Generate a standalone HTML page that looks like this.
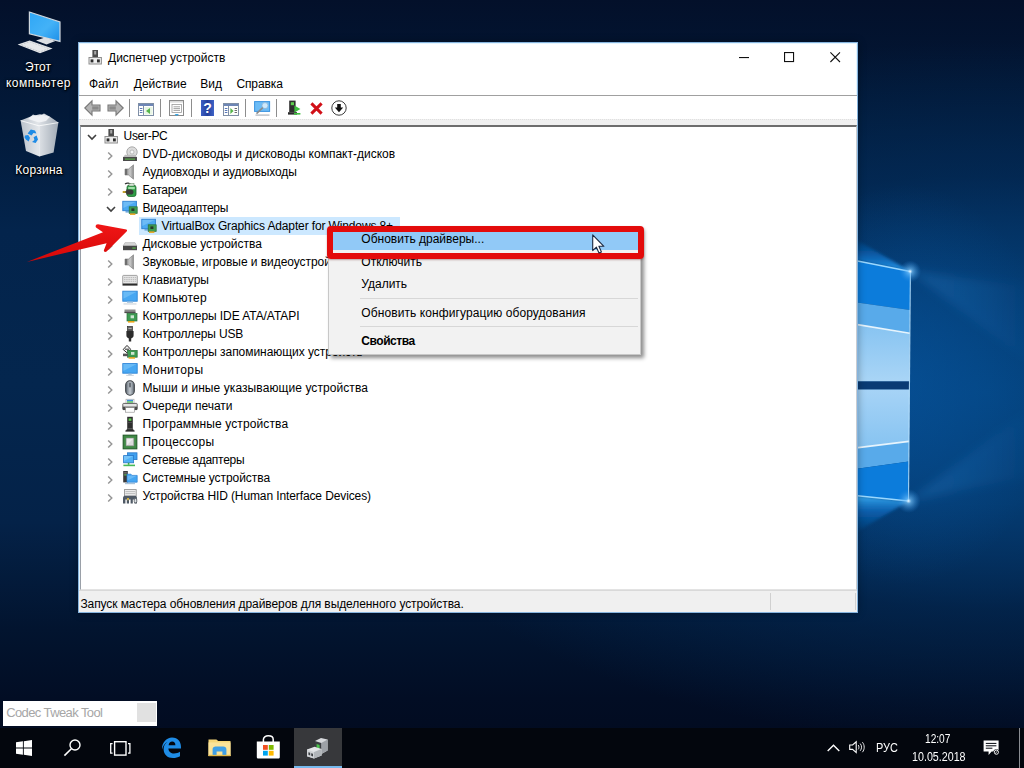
<!DOCTYPE html>
<html lang="ru">
<head>
<meta charset="utf-8">
<title>Диспетчер устройств</title>
<style>
*{box-sizing:border-box;margin:0;padding:0}
html,body{width:1024px;height:768px;overflow:hidden}
body{position:relative;font-family:"Liberation Sans","DejaVu Sans",sans-serif;font-size:12px;color:#000;background:#06183a}
.abs{position:absolute}
svg{display:block;overflow:visible}
/* wallpaper */
#wall{left:0;top:0;width:1024px;height:768px;
 background:
  radial-gradient(ellipse 150px 200px at 905px 385px, rgba(8,92,172,.45) 0%, rgba(8,92,172,0) 100%),
  radial-gradient(ellipse 660px 350px at 985px 392px, rgba(4,68,128,1) 0%, rgba(4,62,118,.9) 32%, rgba(3,48,96,.5) 62%, rgba(3,40,84,0) 100%),
  linear-gradient(180deg,#03102a 0%,#021a3a 16%,#03244c 30%,#04264e 50%,#042248 68%,#02142f 82%,#020d24 91%,#020a1e 100%);
}
/* desktop icons */
.dlabel{color:#fff;font-size:12px;line-height:15px;text-align:center;white-space:nowrap;text-shadow:0 1px 2px #000,0 0 3px rgba(0,0,0,.9),1px 1px 1px rgba(0,0,0,.8)}
/* window */
#win{left:78px;top:42px;width:780px;height:571px;background:#fff;border:1px solid #86b4de;box-shadow:0 0 8px rgba(0,0,0,.32), inset 0 0 0 1px #e4f5ff}
#title{left:29px;top:6px;height:18px;line-height:18px;font-size:12px;white-space:nowrap}
.mi{top:32px;height:18px;line-height:18px;white-space:nowrap}
#menuline{left:0;top:52px;width:778px;height:1px;background:#a0a0a0}
#toolbar{left:0;top:53px;width:778px;height:23px;background:#fff}
.tsep{top:4px;width:1px;height:18px;background:#8d8d8d}
#tbgap{left:0;top:76px;width:778px;height:7px;background:#f0f0f0;border-top:1px dotted #e0e0e0}
#tree{left:1px;top:82px;width:777px;height:465px;background:#fff;border:1px solid #9aa0a8;border-top:2px solid #6d6d6d;border-bottom-color:#e3e3e3;border-right-color:#c9ccd0}
.row{position:absolute;height:18px;line-height:18px;white-space:nowrap;font-size:12px}
.chev{position:absolute;width:10px;height:10px}
.ico{position:absolute;width:16px;height:16px}
#status{left:0;top:547px;width:778px;height:22px;background:#f0f0f0;border-top:1px solid #d9d9d9}
#status span{position:absolute;left:1.4px;top:4px;letter-spacing:-.08px;line-height:18px;white-space:nowrap}
/* context menu */
#menu{left:328px;top:227px;width:313px;height:128px;background:#f2f2f2;border:1px solid #c8c8c8;box-shadow:3px 3px 4px rgba(0,0,0,.45)}
.cmi{position:absolute;left:32.3px;height:22px;line-height:22px;white-space:nowrap;font-size:12px}
.csep{position:absolute;left:31px;width:278px;height:1px;background:#d7d7d7}
#hl{left:333px;top:232px;width:305px;height:18px;background:#91c9f7}
#redbox{left:327px;top:226px;width:317px;height:33px;border:6px solid #e30b0b;border-radius:4px;box-shadow:0 1px 2px rgba(80,0,0,.35)}
/* taskbar */
#taskbar{left:0;top:728px;width:1024px;height:40px;background:#03060d}
#tip{left:3px;top:701px;width:154px;height:25px;background:#fff;border:1px solid #fff}
#tip span{position:absolute;left:2.2px;top:2px;line-height:18px;font-size:13px;color:#a6a6a6;white-space:nowrap;letter-spacing:-.6px}
.tray{color:#fff;font-size:12px;white-space:nowrap;line-height:14px}
</style>
</head>
<body>
<div id="wall" class="abs"></div>

<span class="abs" style="left:0;top:0"><svg width="1024" height="768" viewBox="0 0 1024 768" style=""><defs><linearGradient id="p3" x1="0" y1="0" x2="0" y2="1"><stop offset="0" stop-color="#86c3f1"/><stop offset="1" stop-color="#a9d5f6"/></linearGradient><linearGradient id="p4" x1="0" y1="0" x2="0" y2="1"><stop offset="0" stop-color="#a6d3f6"/><stop offset="1" stop-color="#86c3f1"/></linearGradient><linearGradient id="gu" x1="0" y1="1" x2="0" y2="0"><stop offset="0" stop-color="#2aa2f6" stop-opacity=".95"/><stop offset=".45" stop-color="#0f74cf" stop-opacity=".6"/><stop offset="1" stop-color="#0a5cae" stop-opacity="0"/></linearGradient><linearGradient id="gd" x1="0" y1="0" x2="0" y2="1"><stop offset="0" stop-color="#3fb4fa" stop-opacity=".95"/><stop offset=".4" stop-color="#0f74cf" stop-opacity=".6"/><stop offset="1" stop-color="#0a5cae" stop-opacity="0"/></linearGradient><radialGradient id="fl"><stop offset="0" stop-color="#f0faff" stop-opacity="1"/><stop offset=".22" stop-color="#7cc8ff" stop-opacity=".65"/><stop offset="1" stop-color="#2a8ae0" stop-opacity="0"/></radialGradient><linearGradient id="bm" x1="0" y1="0" x2="1" y2="0"><stop offset="0" stop-color="#3a9cf0" stop-opacity=".22"/><stop offset="1" stop-color="#3a9cf0" stop-opacity="0"/></linearGradient><filter id="bl" x="-20%" y="-20%" width="140%" height="140%"><feGaussianBlur stdDeviation="5"/></filter><filter id="bl2" x="-20%" y="-20%" width="140%" height="140%"><feGaussianBlur stdDeviation="1.6"/></filter></defs><g filter="url(#bl)"><path d="M910 271 L1040 288 V372 Z" fill="url(#bm)"/><path d="M909 501 L1040 474 V400 Z" fill="url(#bm)"/></g><path d="M850 236 L850 259.4 L910.4 271.4 Z" fill="url(#gu)" filter="url(#bl2)"/><path d="M850 495 L908.5 501 L850 536 Z" fill="url(#gd)" filter="url(#bl2)"/><path d="M850 259.4 L910.4 271.4 L910 310 L850 301.6Z" fill="#0c7cdb"/><path d="M850 301.6 L910 310 L909.8 333 L850 323.2Z" fill="#58aaea"/><path d="M850 323.2 L909.8 333 L909.4 381.5 L850 381.5Z" fill="url(#p3)"/><path d="M850 323.4 L909.8 333.2" stroke="#e6f4fd" stroke-width="1.6"/><rect x="850" y="381.5" width="59.6" height="8" fill="#0a3b74"/><path d="M850 389.5 L909.4 389.5 L909 441.6 L850 448.8Z" fill="url(#p4)"/><path d="M850 448.8 L909 441.6 L908.8 461.4 L850 469.8Z" fill="#58aaea"/><path d="M850 469.8 L908.8 461.4 L908.5 501 L850 495Z" fill="#0c7cdb"/><path d="M850 448.6 L909 441.4" stroke="#e6f4fd" stroke-width="1.6"/><path d="M850 259.4 L910.4 271.4" stroke="#9ad8ff" stroke-width="1.5"/><path d="M850 495 L908.5 501" stroke="#9ad8ff" stroke-width="1.5"/><path d="M910.4 271.4 L908.5 501" stroke="#bfe6ff" stroke-width="1.1" opacity=".85"/><circle cx="910.2" cy="271.4" r="11" fill="url(#fl)"/><circle cx="908.6" cy="501" r="12" fill="url(#fl)"/></svg></span>

<span class="abs" style="left:17px;top:11px"><svg width="44" height="43" viewBox="0 0 44 43" style=""><defs><linearGradient id="pcg" x1="0" y1="0" x2="1" y2="1"><stop offset="0" stop-color="#2fa6f5"/><stop offset=".55" stop-color="#43b2f7"/><stop offset="1" stop-color="#1d8fe8"/></linearGradient></defs><path d="M12.4 1 L43 11 V30.4 L12.4 22.8Z" fill="url(#pcg)" stroke="#cfd6dd" stroke-width="1.2"/><path d="M19 29.4 L28 26.4 L38.4 30 L29.5 33.6Z" fill="#dcdfe3"/><path d="M0.6 33.6 L12.6 29.4 L35.6 37.6 L23 42.2Z" fill="#e6e8ea"/><path d="M4 33.8 L12.6 30.8 L32 37.6 L23 40.8Z" fill="none" stroke="#c3c7cc" stroke-width=".8" stroke-dasharray="2 1"/></svg></span>
<div class="dlabel abs" style="left:0;top:59px;width:76px;line-height:16px">Этот<br><span style="letter-spacing:.5px;margin-left:1px">компьютер</span></div>
<span class="abs" style="left:20px;top:113px"><svg width="39" height="44" viewBox="0 0 39 44" style=""><defs><linearGradient id="bg1" x1="0" x2="1"><stop offset="0" stop-color="#c9cfd6"/><stop offset=".45" stop-color="#f2f4f6"/><stop offset="1" stop-color="#aeb6bf"/></linearGradient></defs><path d="M0.6 7.6 L12 3 L20 1.2 L30 3.8 L38.4 9.6 L33.6 39.4 L19.4 43.4 L6 38Z" fill="url(#bg1)" opacity=".93"/><path d="M0.6 7.6 L19 12.8 L38.4 9.6" fill="none" stroke="#fff" stroke-width="1" opacity=".8"/><path d="M19 12.8 L19.4 43.4" stroke="#fff" stroke-width=".8" opacity=".5"/><path d="M8 6 L13 1.4 L18 3.4 L24 0.6 L30 3.8 L26 8 L19 9.6Z" fill="#f4f6f8" opacity=".85"/><g fill="#1e8be6"><path d="M7.6 20.6 L10.8 16.4 L15 17.6 L16.4 20.6 L13.4 20 L11.6 22.6Z"/><path d="M16.6 22.4 L18 26.4 L15.6 30 L12 29 L14.4 27 L13.6 24.2Z"/><path d="M5 22.6 L8.2 22 L10 24.8 L8.6 28.4 L6 26.6 L4.6 24.4Z"/></g></svg></span>
<div class="dlabel abs" style="left:1px;top:163px;width:76px;letter-spacing:.25px">Корзина</div>

<div id="win" class="abs">
  <span class="ico" style="left:8px;top:6px"><svg width="16" height="16" viewBox="0 0 16 16" style=""><rect x="5.4" y="1" width="5.6" height="8" fill="#4d4d4d"/><rect x="7.2" y="2" width="2" height="3.5" fill="#a8a8a8"/><rect x="2" y="8.5" width="12.4" height="6.5" fill="#ececec" stroke="#8e8e8e"/><rect x="3.6" y="10.4" width="2.8" height="3" fill="#2e2e2e"/><rect x="10" y="10.4" width="2.8" height="3" fill="#2e2e2e"/></svg></span>
  <span class="abs" style="left:660px;top:14px"><svg width="11" height="2" viewBox="0 0 11 2" style=""><rect x="0" y="0" width="10" height="1.1" fill="#111"/></svg></span>
  <span class="abs" style="left:705px;top:9px"><svg width="11" height="11" viewBox="0 0 11 11" style=""><rect x="0.55" y="0.55" width="9" height="9" fill="none" stroke="#111" stroke-width="1.1"/></svg></span>
  <span class="abs" style="left:751px;top:9px"><svg width="11" height="11" viewBox="0 0 11 11" style=""><path d="M0.4 0.4 L10 10 M10 0.4 L0.4 10" stroke="#111" stroke-width="1.1"/></svg></span>
  <div id="title" class="abs">Диспетчер устройств</div>
  <div class="mi abs" style="left:10px">Файл</div>
  <div class="mi abs" style="left:54.8px">Действие</div>
  <div class="mi abs" style="left:121.3px">Вид</div>
  <div class="mi abs" style="left:157.4px;letter-spacing:-.1px">Справка</div>
  <div id="menuline" class="abs"></div>
  <div id="toolbar" class="abs">
    <span class="abs" style="left:5px;top:4px"><svg width="17" height="16" viewBox="0 0 17 16" style=""><path d="M0.8 8 L8 0.8 V5 H16 V11 H8 V15.2Z" fill="#b4b4b4" stroke="#787878" stroke-width="1.1"/><rect x="8.2" y="6.4" width="6.4" height="3.2" fill="#8a8a8a"/></svg></span>
    <span class="abs" style="left:28px;top:4px"><svg width="17" height="16" viewBox="0 0 17 16" style=""><path d="M16.2 8 L9 0.8 V5 H1 V11 H9 V15.2Z" fill="#b4b4b4" stroke="#787878" stroke-width="1.1"/><rect x="2.4" y="6.4" width="6.4" height="3.2" fill="#8a8a8a"/></svg></span>
    <i class="tsep abs" style="left:50px;top:3px"></i>
    <i class="tsep abs" style="left:81px;top:3px"></i>
    <i class="tsep abs" style="left:112px;top:3px"></i>
    <i class="tsep abs" style="left:166px;top:3px"></i>
    <i class="tsep abs" style="left:197px;top:3px"></i>
    <span class="abs" style="left:59px;top:7px"><svg width="16" height="13" viewBox="0 0 16 13" style=""><rect x="0.5" y="0.5" width="15" height="12" fill="#fff" stroke="#7f8fa6"/><rect x="1" y="1" width="14" height="2" fill="#6d86b6"/><path d="M5.5 3 V12.5" stroke="#7f8fa6"/><path d="M1.8 5.5 H4.4 M1.8 7.5 H4.4 M1.8 9.5 H4.4" stroke="#5a78b8" stroke-width="1"/><rect x="6.5" y="4" width="8" height="7.6" fill="#e8f5e4"/><path d="M12 5 V11 L8 8Z" fill="#55b54a"/></svg></span>
    <span class="abs" style="left:90px;top:4px"><svg width="15" height="16" viewBox="0 0 15 16" style=""><rect x="0.5" y="0.5" width="14" height="15" fill="#fff" stroke="#8a8a8a"/><rect x="1" y="1" width="13" height="1.6" fill="#d9d9d9"/><rect x="3" y="4.4" width="9.5" height="8" fill="#fff" stroke="#9a9a9a" stroke-width=".8"/><path d="M4.5 6.8 H11 M4.5 8.6 H11 M4.5 10.4 H11" stroke="#8a8a8a" stroke-width=".8"/><path d="M5.5 14 H10 L7.8 16Z" fill="#36a3e0"/></svg></span>
    <span class="abs" style="left:122px;top:4px"><svg width="13" height="16" viewBox="0 0 13 16" style=""><defs><linearGradient id="hg" x1="0" x2="1"><stop offset="0" stop-color="#3d5fc4"/><stop offset=".5" stop-color="#24409c"/><stop offset="1" stop-color="#3f63c8"/></linearGradient></defs><rect x="0" y="0" width="13" height="16" fill="url(#hg)"/><text x="6.5" y="13" font-family="Liberation Sans,sans-serif" font-weight="bold" font-size="14" fill="#fff" text-anchor="middle">?</text></svg></span>
    <span class="abs" style="left:144px;top:7px"><svg width="16" height="13" viewBox="0 0 16 13" style=""><rect x="0.5" y="0.5" width="15" height="12" fill="#fff" stroke="#7f8fa6"/><rect x="1" y="1" width="14" height="2" fill="#6d86b6"/><path d="M5.5 3 V12.5" stroke="#7f8fa6"/><path d="M1.8 5.5 H4.4 M1.8 7.5 H4.4 M1.8 9.5 H4.4" stroke="#5a78b8" stroke-width="1"/><rect x="6.5" y="4" width="8" height="7.6" fill="#e8f5e4"/><rect x="6.5" y="4" width="8" height="7.6" fill="#fff"/><path d="M7.4 5 V11 L10.6 8Z" fill="#55b54a"/><path d="M11.6 5.5 H14 M11.6 7.5 H14 M11.6 9.5 H14" stroke="#6d6d6d"/></svg></span>
    <span class="abs" style="left:175px;top:5px"><svg width="17" height="15" viewBox="0 0 17 15" style=""><rect x="0.6" y="0.6" width="15" height="9.8" fill="#6cbcf6" stroke="#3a93e0" stroke-width="1"/><circle cx="11" cy="4.6" r="3" fill="#cfe9fb" stroke="#8fb6d8" stroke-width=".8"/><path d="M8.8 6.6 L2.5 12.6" stroke="#8c8c8c" stroke-width="1.6"/><rect x="1.5" y="13.4" width="14" height="1.4" fill="#b9bfc6"/></svg></span>
    <span class="abs" style="left:208px;top:4px"><svg width="14" height="16" viewBox="0 0 14 16" style=""><rect x="2.2" y="0.6" width="6.4" height="11.6" fill="#2f2f2f"/><rect x="3.8" y="2.2" width="3.2" height="3" fill="#5fcf4f"/><rect x="1" y="12.2" width="9" height="2.4" fill="#2a2a2a"/><path d="M7.4 5.6 L13.4 9 L7.4 12.4Z" fill="#3fbf3f"/><rect x="7" y="13" width="6.4" height="1.6" fill="#3fbf3f"/></svg></span>
    <span class="abs" style="left:231px;top:6px"><svg width="13" height="13" viewBox="0 0 13 13" style=""><path d="M1.4 1.4 L11.6 11.6 M11.6 1.4 L1.4 11.6" stroke="#d10f17" stroke-width="3"/></svg></span>
    <span class="abs" style="left:252px;top:4px"><svg width="16" height="16" viewBox="0 0 16 16" style=""><circle cx="8" cy="8" r="7.2" fill="#fff" stroke="#3c3c3c" stroke-width="1"/><path d="M6.2 4 H9.8 V7.6 H12.2 L8 12.2 L3.8 7.6 H6.2Z" fill="#111"/></svg></span>
  </div>
  <div id="tbgap" class="abs"></div>
  <div id="tree" class="abs">
    <span class="chev" style="left:6.0px;top:5px"><svg width="10" height="10" viewBox="0 0 10 10" style=""><path d="M1 3 L5 7 L9 3" fill="none" stroke="#404040" stroke-width="1.6"/></svg></span>
    <span class="ico" style="left:22px;top:1px"><svg width="16" height="16" viewBox="0 0 16 16" style=""><rect x="5.4" y="1" width="5.6" height="8" fill="#4d4d4d"/><rect x="7.2" y="2" width="2" height="3.5" fill="#a8a8a8"/><rect x="2" y="8.5" width="12.4" height="6.5" fill="#ececec" stroke="#8e8e8e"/><rect x="3.6" y="10.4" width="2.8" height="3" fill="#2e2e2e"/><rect x="10" y="10.4" width="2.8" height="3" fill="#2e2e2e"/></svg></span>
    <div class="row" id="r0" style="left:42.5px;top:0px;letter-spacing:-0.29px">User-PC</div>
    <span class="chev" style="left:24.0px;top:23.5px"><svg width="10" height="10" viewBox="0 0 10 10" style=""><path d="M3.2 1.4 L6.8 5 L3.2 8.6" fill="none" stroke="#969696" stroke-width="1.45"/></svg></span>
    <span class="ico" style="left:41px;top:19px"><svg width="16" height="16" viewBox="0 0 16 16" style=""><circle cx="10" cy="6" r="5.2" fill="#dcdcdc" stroke="#9b9b9b" stroke-width=".8"/><circle cx="10" cy="6" r="2" fill="#f6f6f6" stroke="#a9a9a9" stroke-width=".7"/><path d="M1 11.2 L3 8.8 H13 L15 11.2Z" fill="#bdbdbd"/><rect x="1" y="11" width="14" height="4" fill="#4a4a4a"/><rect x="3" y="12.6" width="10" height="1" fill="#5bbf4a"/></svg></span>
    <div class="row" id="r1" style="left:61.5px;top:18px">DVD-дисководы и дисководы компакт-дисков</div>
    <span class="chev" style="left:24.0px;top:41.5px"><svg width="10" height="10" viewBox="0 0 10 10" style=""><path d="M3.2 1.4 L6.8 5 L3.2 8.6" fill="none" stroke="#969696" stroke-width="1.45"/></svg></span>
    <span class="ico" style="left:41px;top:37px"><svg width="16" height="16" viewBox="0 0 16 16" style=""><defs><linearGradient id="spk" x1="0" x2="1"><stop offset="0" stop-color="#8a8a8a"/><stop offset=".6" stop-color="#c9c9c9"/><stop offset="1" stop-color="#8d8d8d"/></linearGradient></defs><path d="M3 5 H6.5 L11.5 0.8 V15.2 L6.5 11 H3Z" fill="url(#spk)" stroke="#7a7a7a" stroke-width=".6"/><rect x="3" y="5" width="2.2" height="6" fill="#6f6f6f"/></svg></span>
    <div class="row" id="r2" style="left:61.5px;top:36px;letter-spacing:-0.11px">Аудиовходы и аудиовыходы</div>
    <span class="chev" style="left:24.0px;top:59.5px"><svg width="10" height="10" viewBox="0 0 10 10" style=""><path d="M3.2 1.4 L6.8 5 L3.2 8.6" fill="none" stroke="#969696" stroke-width="1.45"/></svg></span>
    <span class="ico" style="left:41px;top:55px"><svg width="16" height="16" viewBox="0 0 16 16" style=""><path d="M3 2 C5 0.5 8 1 9 3" fill="none" stroke="#333" stroke-width="1.2"/><rect x="5" y="3.2" width="9" height="11.3" rx="2.2" fill="#2f9e46" stroke="#1d6a2d" stroke-width=".8"/><rect x="7" y="1.6" width="5" height="2.4" fill="#d8e8d8" stroke="#5a7a5a" stroke-width=".5"/><rect x="6.2" y="5" width="6.6" height="2.2" fill="#9fe0a8"/><path d="M1 9 h3.2 v-1.6 h4.3 c2 0 3 1 3 2.6 s-1 2.6 -3 2.6 h-4.3 v-1.6 h-3.2z" fill="#3a3a3a"/><rect x="0.6" y="9.2" width="3" height="1.6" fill="#e0b82e"/></svg></span>
    <div class="row" id="r3" style="left:61.5px;top:54px;letter-spacing:-0.29px">Батареи</div>
    <span class="chev" style="left:25.0px;top:77px"><svg width="10" height="10" viewBox="0 0 10 10" style=""><path d="M1 3 L5 7 L9 3" fill="none" stroke="#404040" stroke-width="1.6"/></svg></span>
    <span class="ico" style="left:41px;top:73px"><svg width="16" height="16" viewBox="0 0 16 16" style=""><rect x="0.8" y="1.3" width="13.6" height="9.4" fill="#4aa9f2" stroke="#2c7ed0" stroke-width=".9"/><path d="M1.3 1.8 H14 L1.3 8Z" fill="#7cc3f7" opacity=".7"/><rect x="3.5" y="11" width="4.5" height="1.6" fill="#6aa6dc"/><rect x="7.2" y="6.8" width="8" height="6.6" fill="#3d9b52" stroke="#2a7039" stroke-width=".7"/><rect x="9.4" y="8.4" width="3" height="2.6" fill="#26382a"/><rect x="8" y="13.4" width="5.4" height="1.5" fill="#e9a61a"/></svg></span>
    <div class="row" id="r4" style="left:61.5px;top:72px;letter-spacing:-0.28px">Видеоадаптеры</div>
    <div class="abs" style="left:57.5px;top:90px;width:261px;height:18px;background:#cce8ff"></div>
    <span class="ico" style="left:60px;top:91px"><svg width="16" height="16" viewBox="0 0 16 16" style=""><rect x="0.8" y="1.3" width="13.6" height="9.4" fill="#4aa9f2" stroke="#2c7ed0" stroke-width=".9"/><path d="M1.3 1.8 H14 L1.3 8Z" fill="#7cc3f7" opacity=".7"/><rect x="3.5" y="11" width="4.5" height="1.6" fill="#6aa6dc"/><rect x="7.2" y="6.8" width="8" height="6.6" fill="#3d9b52" stroke="#2a7039" stroke-width=".7"/><rect x="9.4" y="8.4" width="3" height="2.6" fill="#26382a"/><rect x="8" y="13.4" width="5.4" height="1.5" fill="#e9a61a"/></svg></span>
    <div class="row" id="r5" style="left:80.5px;top:90px;letter-spacing:-0.13px">VirtualBox Graphics Adapter for Windows 8+</div>
    <span class="chev" style="left:24.0px;top:113.5px"><svg width="10" height="10" viewBox="0 0 10 10" style=""><path d="M3.2 1.4 L6.8 5 L3.2 8.6" fill="none" stroke="#969696" stroke-width="1.45"/></svg></span>
    <span class="ico" style="left:41px;top:109px"><svg width="16" height="16" viewBox="0 0 16 16" style=""><path d="M1 10 L3 6.6 H13 L15 10Z" fill="#d6d6d6" stroke="#a6a6a6" stroke-width=".5"/><rect x="1" y="9.8" width="14" height="4.4" fill="#474747"/><rect x="10.3" y="11.5" width="3.4" height="1.1" fill="#5bbf4a"/></svg></span>
    <div class="row" id="r6" style="left:61.5px;top:108px;letter-spacing:-0.02px">Дисковые устройства</div>
    <span class="chev" style="left:24.0px;top:131.5px"><svg width="10" height="10" viewBox="0 0 10 10" style=""><path d="M3.2 1.4 L6.8 5 L3.2 8.6" fill="none" stroke="#969696" stroke-width="1.45"/></svg></span>
    <span class="ico" style="left:41px;top:127px"><svg width="16" height="16" viewBox="0 0 16 16" style=""><defs><linearGradient id="spk" x1="0" x2="1"><stop offset="0" stop-color="#8a8a8a"/><stop offset=".6" stop-color="#c9c9c9"/><stop offset="1" stop-color="#8d8d8d"/></linearGradient></defs><path d="M3 5 H6.5 L11.5 0.8 V15.2 L6.5 11 H3Z" fill="url(#spk)" stroke="#7a7a7a" stroke-width=".6"/><rect x="3" y="5" width="2.2" height="6" fill="#6f6f6f"/></svg></span>
    <div class="row" id="r7" style="left:61.5px;top:126px;letter-spacing:-0.05px">Звуковые, игровые и видеоустройства</div>
    <span class="chev" style="left:24.0px;top:149.5px"><svg width="10" height="10" viewBox="0 0 10 10" style=""><path d="M3.2 1.4 L6.8 5 L3.2 8.6" fill="none" stroke="#969696" stroke-width="1.45"/></svg></span>
    <span class="ico" style="left:41px;top:145px"><svg width="16" height="16" viewBox="0 0 16 16" style=""><rect x="0.7" y="3.4" width="14.6" height="8.6" rx=".8" fill="#e6e6e6" stroke="#8d8d8d" stroke-width=".8"/><path d="M2 5.5 H14 M2 7.4 H14 M2 9.3 H14" stroke="#b5b5b5" stroke-width=".9" stroke-dasharray="1.5 .7"/><rect x="0.5" y="11.6" width="15" height="2" fill="#2b2b2b"/></svg></span>
    <div class="row" id="r8" style="left:61.5px;top:144px;letter-spacing:-0.06px">Клавиатуры</div>
    <span class="chev" style="left:24.0px;top:167.5px"><svg width="10" height="10" viewBox="0 0 10 10" style=""><path d="M3.2 1.4 L6.8 5 L3.2 8.6" fill="none" stroke="#969696" stroke-width="1.45"/></svg></span>
    <span class="ico" style="left:41px;top:163px"><svg width="16" height="16" viewBox="0 0 16 16" style=""><rect x="0.8" y="1.2" width="14.4" height="10" fill="#47a7f2" stroke="#2d84d6" stroke-width=".9"/><path d="M1.3 1.7 H14.8 L1.3 8.8Z" fill="#7fc6f8" opacity=".6"/><rect x="5" y="11.6" width="6" height="1.3" fill="#a9c7e2"/><rect x="1.5" y="13.3" width="13" height="1.3" fill="#d3d9df"/></svg></span>
    <div class="row" id="r9" style="left:61.5px;top:162px;letter-spacing:0.25px">Компьютер</div>
    <span class="chev" style="left:24.0px;top:185.5px"><svg width="10" height="10" viewBox="0 0 10 10" style=""><path d="M3.2 1.4 L6.8 5 L3.2 8.6" fill="none" stroke="#969696" stroke-width="1.45"/></svg></span>
    <span class="ico" style="left:41px;top:181px"><svg width="16" height="16" viewBox="0 0 16 16" style=""><rect x="2.5" y="1.5" width="11" height="3.2" fill="#8c8c8c"/><rect x="2.5" y="3.8" width="11" height="1.3" fill="#4d4d4d"/><rect x="5" y="5.4" width="10" height="7.6" fill="#3d9b52" stroke="#2a7039" stroke-width=".7"/><rect x="8.6" y="7.3" width="3.4" height="3" fill="#cfe6d2"/><rect x="6" y="13" width="6.4" height="1.6" fill="#e9a61a"/></svg></span>
    <div class="row" id="r10" style="left:61.5px;top:180px;letter-spacing:-0.07px">Контроллеры IDE ATA/ATAPI</div>
    <span class="chev" style="left:24.0px;top:203.5px"><svg width="10" height="10" viewBox="0 0 10 10" style=""><path d="M3.2 1.4 L6.8 5 L3.2 8.6" fill="none" stroke="#969696" stroke-width="1.45"/></svg></span>
    <span class="ico" style="left:41px;top:199px"><svg width="16" height="16" viewBox="0 0 16 16" style=""><rect x="5.6" y="0.6" width="4.8" height="4.6" fill="#5a5a5a" stroke="#2c2c2c" stroke-width=".7"/><rect x="6.6" y="1.8" width="1" height="1.2" fill="#ddd"/><rect x="8.4" y="1.8" width="1" height="1.2" fill="#ddd"/><path d="M4.4 5 H11.6 V9.6 C11.6 11.4 10 12 9.2 12.4 V15.4 H6.8 V12.4 C6 12 4.4 11.4 4.4 9.6Z" fill="#2c2c2c"/></svg></span>
    <div class="row" id="r11" style="left:61.5px;top:198px;letter-spacing:-0.15px">Контроллеры USB</div>
    <span class="chev" style="left:24.0px;top:221.5px"><svg width="10" height="10" viewBox="0 0 10 10" style=""><path d="M3.2 1.4 L6.8 5 L3.2 8.6" fill="none" stroke="#969696" stroke-width="1.45"/></svg></span>
    <span class="ico" style="left:41px;top:217px"><svg width="16" height="16" viewBox="0 0 16 16" style=""><path d="M1.2 5.5 L5 1.4 L8.6 5.2 L5 8.8Z" fill="#f4f4f4" stroke="#2f2f2f" stroke-width="1"/><path d="M3 5.2 H7" stroke="#2f2f2f" stroke-width="1"/><rect x="5.6" y="6.4" width="9.6" height="6.8" fill="#3d9b52" stroke="#2a7039" stroke-width=".7"/><rect x="9" y="8" width="3.4" height="2.8" fill="#cfe6d2"/><rect x="1" y="9.6" width="5" height="2.6" fill="#555"/><rect x="6.6" y="13.2" width="6.4" height="1.5" fill="#e9a61a"/></svg></span>
    <div class="row" id="r12" style="left:61.5px;top:216px;letter-spacing:-0.05px">Контроллеры запоминающих устройств</div>
    <span class="chev" style="left:24.0px;top:239.5px"><svg width="10" height="10" viewBox="0 0 10 10" style=""><path d="M3.2 1.4 L6.8 5 L3.2 8.6" fill="none" stroke="#969696" stroke-width="1.45"/></svg></span>
    <span class="ico" style="left:41px;top:235px"><svg width="16" height="16" viewBox="0 0 16 16" style=""><rect x="0.8" y="1.6" width="14.4" height="9.6" fill="#47a7f2" stroke="#2d84d6" stroke-width=".9"/><path d="M1.3 2.1 H14.8 L1.3 9Z" fill="#7fc6f8" opacity=".6"/><rect x="6.3" y="11.6" width="3.4" height="1.2" fill="#9bbad6"/><rect x="4.2" y="12.8" width="7.6" height="1.1" fill="#c9d3dc"/></svg></span>
    <div class="row" id="r13" style="left:61.5px;top:234px;letter-spacing:0.45px">Мониторы</div>
    <span class="chev" style="left:24.0px;top:257.5px"><svg width="10" height="10" viewBox="0 0 10 10" style=""><path d="M3.2 1.4 L6.8 5 L3.2 8.6" fill="none" stroke="#969696" stroke-width="1.45"/></svg></span>
    <span class="ico" style="left:41px;top:253px"><svg width="16" height="16" viewBox="0 0 16 16" style=""><defs><linearGradient id="mou" x1="0" x2="1"><stop offset="0" stop-color="#5f6871"/><stop offset=".5" stop-color="#c3cad1"/><stop offset="1" stop-color="#636c75"/></linearGradient></defs><rect x="3.7" y="0.8" width="8.6" height="14.4" rx="4.3" fill="url(#mou)" stroke="#3b3f44" stroke-width="1.1"/><rect x="7.3" y="2.4" width="1.4" height="5" rx=".7" fill="#4a5058"/></svg></span>
    <div class="row" id="r14" style="left:61.5px;top:252px;letter-spacing:0.08px">Мыши и иные указывающие устройства</div>
    <span class="chev" style="left:24.0px;top:275.5px"><svg width="10" height="10" viewBox="0 0 10 10" style=""><path d="M3.2 1.4 L6.8 5 L3.2 8.6" fill="none" stroke="#969696" stroke-width="1.45"/></svg></span>
    <span class="ico" style="left:41px;top:271px"><svg width="16" height="16" viewBox="0 0 16 16" style=""><rect x="4" y="1.2" width="8" height="4.4" fill="#fff" stroke="#9b9b9b" stroke-width=".6"/><rect x="5" y="1.8" width="6" height="1.5" fill="#3b8de0"/><rect x="5" y="3.3" width="6" height="1.4" fill="#4fbf5a"/><rect x="0.8" y="5.4" width="14.4" height="6.2" rx=".8" fill="#e3e3e3" stroke="#555" stroke-width=".9"/><rect x="0.8" y="8.6" width="14.4" height="3.4" fill="#4b4b4b"/><rect x="3.6" y="9.6" width="8.8" height="4.6" fill="#fdfdfd" stroke="#8a8a8a" stroke-width=".6"/></svg></span>
    <div class="row" id="r15" style="left:61.5px;top:270px">Очереди печати</div>
    <span class="chev" style="left:24.0px;top:293.5px"><svg width="10" height="10" viewBox="0 0 10 10" style=""><path d="M3.2 1.4 L6.8 5 L3.2 8.6" fill="none" stroke="#969696" stroke-width="1.45"/></svg></span>
    <span class="ico" style="left:41px;top:289px"><svg width="16" height="16" viewBox="0 0 16 16" style=""><rect x="5.2" y="0.8" width="5.6" height="11.6" fill="#2e2e2e"/><rect x="6.6" y="2.4" width="2.8" height="2.4" fill="#5fcf4f"/><rect x="6" y="6" width="4" height=".8" fill="#555"/><path d="M4 15 L5.2 12.2 H10.8 L12 15Z" fill="#3a3a3a"/><rect x="3.4" y="14.4" width="9.2" height="1.2" fill="#222"/></svg></span>
    <div class="row" id="r16" style="left:61.5px;top:288px;letter-spacing:0.11px">Программные устройства</div>
    <span class="chev" style="left:24.0px;top:311.5px"><svg width="10" height="10" viewBox="0 0 10 10" style=""><path d="M3.2 1.4 L6.8 5 L3.2 8.6" fill="none" stroke="#969696" stroke-width="1.45"/></svg></span>
    <span class="ico" style="left:41px;top:307px"><svg width="16" height="16" viewBox="0 0 16 16" style=""><rect x="1.2" y="1.2" width="13.6" height="13.6" fill="#3f8a45" stroke="#235c2a" stroke-width="1.1"/><rect x="4.2" y="4.2" width="7.6" height="7.6" fill="#dcdcdc" stroke="#9a9a9a" stroke-width=".7"/><path d="M4.6 4.6 H11.4 L4.6 11.4Z" fill="#f2f2f2" opacity=".8"/></svg></span>
    <div class="row" id="r17" style="left:61.5px;top:306px;letter-spacing:0.23px">Процессоры</div>
    <span class="chev" style="left:24.0px;top:329.5px"><svg width="10" height="10" viewBox="0 0 10 10" style=""><path d="M3.2 1.4 L6.8 5 L3.2 8.6" fill="none" stroke="#969696" stroke-width="1.45"/></svg></span>
    <span class="ico" style="left:41px;top:325px"><svg width="16" height="16" viewBox="0 0 16 16" style=""><rect x="5.4" y="0.8" width="9.6" height="6.8" fill="#3f9fee" stroke="#2a78c8" stroke-width=".8"/><rect x="1.6" y="3.6" width="10" height="7.2" fill="#4fb0f6" stroke="#2a78c8" stroke-width=".8"/><path d="M2 4 H11.2 L2 9Z" fill="#8fd0fb" opacity=".6"/><rect x="5.8" y="10.8" width="1.6" height="2" fill="#3aa84a"/><rect x="1.4" y="12.6" width="11.6" height="1.6" fill="#46b956"/></svg></span>
    <div class="row" id="r18" style="left:61.5px;top:324px;letter-spacing:-0.27px">Сетевые адаптеры</div>
    <span class="chev" style="left:24.0px;top:347.5px"><svg width="10" height="10" viewBox="0 0 10 10" style=""><path d="M3.2 1.4 L6.8 5 L3.2 8.6" fill="none" stroke="#969696" stroke-width="1.45"/></svg></span>
    <span class="ico" style="left:41px;top:343px"><svg width="16" height="16" viewBox="0 0 16 16" style=""><rect x="1.2" y="1" width="4.6" height="11.4" fill="#3a3a3a"/><rect x="2.2" y="2.4" width="2.6" height="1" fill="#8a8a8a"/><rect x="2.2" y="4.4" width="2.6" height="1" fill="#6dcf5c"/><path d="M5 4.2 H9 L10 5.4 H15.2 V12.2 H5Z" fill="#45a6f2" stroke="#2a7cd0" stroke-width=".7"/><path d="M5.4 5.8 H14.8 L5.4 10.5Z" fill="#86c9f9" opacity=".55"/><rect x="3" y="13" width="10" height="1.2" fill="#a9c2d8"/></svg></span>
    <div class="row" id="r19" style="left:61.5px;top:342px;letter-spacing:-0.06px">Системные устройства</div>
    <span class="chev" style="left:24.0px;top:365.5px"><svg width="10" height="10" viewBox="0 0 10 10" style=""><path d="M3.2 1.4 L6.8 5 L3.2 8.6" fill="none" stroke="#969696" stroke-width="1.45"/></svg></span>
    <span class="ico" style="left:41px;top:361px"><svg width="16" height="16" viewBox="0 0 16 16" style=""><rect x="2.4" y="1.6" width="11.8" height="6.6" fill="#ededed" stroke="#8a8a8a" stroke-width=".8"/><path d="M3.4 3.6 H13.2 M3.4 5.6 H13.2" stroke="#b9b9b9" stroke-width=".9"/><path d="M1 15.4 V10 C1 8.4 2.2 7.8 3.4 7.8 H12.6 C13.8 7.8 15 8.4 15 10 V15.4 H12.4 V11.6 H10.8 V15.4 H8.6 V11.6 H7 V15.4 H4.8 V11.6 H3.4 V15.4Z" fill="#4f5965"/><rect x="5.2" y="10" width="1.6" height="2.2" fill="#e9c23a"/><rect x="12.2" y="10.6" width="2.6" height="4.2" rx="1.2" fill="#dfe4e8" stroke="#3b3f44" stroke-width=".6"/></svg></span>
    <div class="row" id="r20" style="left:61.5px;top:360px;letter-spacing:-0.11px">Устройства HID (Human Interface Devices)</div>
  </div>
  <div id="status" class="abs"><span>Запуск мастера обновления драйверов для выделенного устройства.</span>
    <i class="abs" style="left:691px;top:2px;width:1px;height:17px;background:#d0d0d0"></i>
    <i class="abs" style="left:776px;top:2px;width:1px;height:17px;background:#d0d0d0"></i>
  </div>
</div>

<div id="menu" class="abs">
  <div class="cmi" style="top:1px">Обновить драйверы...</div>
  <div class="cmi" style="top:23px">Отключить</div>
  <div class="cmi" style="top:45px">Удалить</div>
  <div class="csep" style="top:70px"></div>
  <div class="cmi" style="top:74px;letter-spacing:.09px">Обновить конфигурацию оборудования</div>
  <div class="csep" style="top:98px"></div>
  <div class="cmi" style="top:102px;font-weight:bold;letter-spacing:-.45px">Свойства</div>
</div>
<div id="hl" class="abs"></div>
<div class="abs cmi" style="left:361.3px;top:228px">Обновить драйверы...</div>
<div id="redbox" class="abs"></div>

<span class="abs" style="left:0;top:0"><svg width="1024" height="768" viewBox="0 0 1024 768" style=""><defs><linearGradient id="ag" x1="0" y1="0" x2="0" y2="1"><stop offset="0" stop-color="#f01616"/><stop offset="1" stop-color="#d50808"/></linearGradient></defs><path d="M26.9 261.9 L103 232.2 L96 227.4 Q94.6 224.6 98 224.3 L126.4 229.6 Q127.6 230.4 126.6 231.4 L106.6 251.6 Q104.4 252.8 103.8 250.4 L106.6 243.2 Z" fill="url(#ag)"/></svg></span>

<span class="abs" style="left:592px;top:234px"><svg width="13" height="20" viewBox="0 0 13 20" style=""><path d="M0.7 0.8 V16.6 L4.4 13.2 L7 19 L9.4 17.9 L6.9 12.3 H11.9Z" fill="#fff" stroke="#1a2740" stroke-width="1.1" stroke-linejoin="round"/></svg></span>

<div id="tip" class="abs"><span>Codec Tweak Tool</span><i class="abs" style="left:133px;top:1px;width:19px;height:19px;background:#e1e1e1"></i></div>

<div id="taskbar" class="abs">
  <div class="abs" style="left:294px;top:0;width:48px;height:40px;background:#37383b"></div>
  <div class="abs" style="left:294px;top:38px;width:48px;height:2px;background:#76b9ed"></div>
  <span class="abs" style="left:16px;top:12px"><svg width="16" height="16" viewBox="0 0 16 16" style=""><path d="M0 2.3 L6.9 1.3 V7.6 H0Z M7.8 1.2 L16 0 V7.6 H7.8Z M0 8.4 H6.9 V14.7 L0 13.7Z M7.8 8.4 H16 V16 L7.8 14.8Z" fill="#fff"/></svg></span>
  <span class="abs" style="left:63px;top:10px"><svg width="19" height="19" viewBox="0 0 19 19" style=""><circle cx="12" cy="7" r="5" fill="none" stroke="#fff" stroke-width="1.4"/><path d="M8.4 10.8 L1.4 17.6" stroke="#fff" stroke-width="1.6"/></svg></span>
  <span class="abs" style="left:110px;top:13px"><svg width="21" height="15" viewBox="0 0 21 15" style=""><rect x="4.6" y="0.7" width="11.4" height="13.4" fill="none" stroke="#fff" stroke-width="1.4"/><path d="M2.6 2.6 H0.7 V12.2 H2.6 M18 2.6 H19.9 V12.2 H18" fill="none" stroke="#fff" stroke-width="1.3"/></svg></span>
  <span class="abs" style="left:161px;top:9px"><svg width="21" height="22" viewBox="0 0 21 22" style=""><path d="M1 12.6 C0.6 5.6 5.6 0.6 11 0.6 C17 0.6 20.4 5 20 11.4 H7.4 C7.6 14.8 10 16.4 13 16.4 C15.4 16.4 17.4 15.8 19 14.8 V19.2 C17 20.4 14.6 21 12 21 C6.4 21 2.6 17.6 2.6 12 C2.6 9 4.2 6.4 6.6 4.8 C4 6 1.8 8.8 1 12.6Z M7.6 8.2 H14.4 C14.4 6 13.2 4.6 11.2 4.6 C9.2 4.6 8 6 7.6 8.2Z" fill="#1f8ce6" fill-rule="evenodd"/></svg></span>
  <span class="abs" style="left:208px;top:10px"><svg width="23" height="19" viewBox="0 0 23 19" style=""><path d="M0.5 1.4 H8.4 L10.2 3 H22.5 V18 H0.5Z" fill="#f6d678"/><path d="M0.5 4.4 H22.5 V18 H0.5Z" fill="#fbe39a"/><path d="M4.6 18 V11.4 C4.6 9.6 6 8.6 7.6 8.6 H15.4 C17 8.6 18.4 9.6 18.4 11.4 V18 H14.4 V13.6 H8.6 V18Z" fill="#3f9fe6"/><rect x="0.5" y="16.8" width="22" height="1.4" fill="#e4b94a"/></svg></span>
  <span class="abs" style="left:256px;top:7px"><svg width="25" height="24" viewBox="0 0 25 24" style=""><path d="M7.4 7 V4.4 C7.4 2.2 9.4 0.8 12.3 0.8 C15.2 0.8 17.2 2.2 17.2 4.4 V7" fill="none" stroke="#fff" stroke-width="1.5"/><path d="M0.8 6.6 H23.8 V22 C23.8 23 23.2 23.6 22.2 23.6 H2.4 C1.4 23.6 0.8 23 0.8 22Z" fill="#fff"/><rect x="7" y="10" width="4.8" height="4.8" fill="#f25022"/><rect x="12.8" y="10" width="4.8" height="4.8" fill="#7fba00"/><rect x="7" y="15.8" width="4.8" height="4.8" fill="#00a4ef"/><rect x="12.8" y="15.8" width="4.8" height="4.8" fill="#ffb900"/></svg></span>
  <span class="abs" style="left:306px;top:9px"><svg width="23" height="22" viewBox="0 0 23 22" style=""><path d="M9 4 L15 1 L21.6 2.6 V13.6 L15.4 17 L9 15Z" fill="#d7d9dc"/><path d="M15.2 6 L21.6 2.6 V13.6 L15.4 17Z" fill="#9da1a6"/><path d="M9 4 L15.2 6 L15.4 17 L9 15Z" fill="#3a3d40"/><path d="M10.6 7 L13.6 8 V11.6 L10.6 10.6Z" fill="#49c24a"/><path d="M1 12.6 L8.6 9.8 L15.6 12 V18.4 L8 21.6 L1 19.2Z" fill="#e3e5e7"/><path d="M8 15 L15.6 12 V18.4 L8 21.6Z" fill="#b1b5b9"/><path d="M1 12.6 L8 15 V21.6 L1 19.2Z" fill="#d0d3d6"/><path d="M2.4 15.2 L4.2 15.8 V18.4 L2.4 17.8Z M5.2 16.2 L7 16.8 V19.4 L5.2 18.8Z" fill="#3e4246"/></svg></span>
  <span class="abs" style="left:827px;top:16px"><svg width="13" height="8" viewBox="0 0 13 8" style=""><path d="M0.7 7 L6.5 1.2 L12.3 7" fill="none" stroke="#fff" stroke-width="1.4"/></svg></span>
  <span class="abs" style="left:849px;top:13px"><svg width="17" height="13" viewBox="0 0 17 13" style=""><path d="M0.7 4 H3.6 L7.2 0.8 V11.6 L3.6 8.4 H0.7Z" fill="none" stroke="#fff" stroke-width="1.1"/><path d="M9.2 4 C10.2 5.2 10.2 7.2 9.2 8.4 M11.2 2.6 C13 4.6 13 7.8 11.2 9.8 M13.4 1.2 C15.8 4 15.8 8.4 13.4 11.2" fill="none" stroke="#fff" stroke-width="1" opacity=".9"/></svg></span>
  <div class="tray abs" id="rus" style="left:876.3px;top:12.5px;transform:scaleX(.91);transform-origin:0 0">РУС</div>
  <div class="tray abs" id="time" style="left:925px;top:4px;transform:scaleX(.845);transform-origin:0 0">12:07</div>
  <div class="tray abs" id="date" style="left:911.6px;top:22px;transform:scaleX(.892);transform-origin:0 0">10.05.2018</div>
  <span class="abs" style="left:983px;top:12px"><svg width="17" height="16" viewBox="0 0 17 16" style=""><path d="M0.6 0.6 H15.6 V11.6 H8.6 L5.6 15 V11.6 H0.6Z" fill="#fff"/><path d="M2.8 3.4 H13.4 M2.8 5.8 H13.4 M2.8 8.2 H9.4" stroke="#03060d" stroke-width="1"/><circle cx="13.4" cy="12.2" r="3" fill="#03060d"/><circle cx="13.4" cy="12.2" r="2.1" fill="none" stroke="#fff" stroke-width=".9"/><path d="M12.2 13.4 L14.6 11" stroke="#fff" stroke-width=".8"/></svg></span>
  <div class="abs" style="left:1019px;top:0;width:1px;height:40px;background:#8a8d92"></div>
</div>
</body>
</html>
